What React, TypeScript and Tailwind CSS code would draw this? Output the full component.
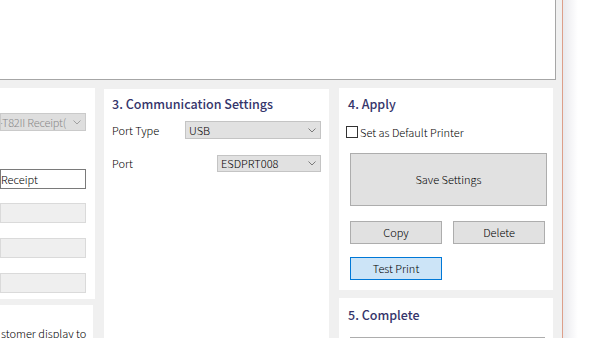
import React from "react";

const Chevron = ({ color = "#7a7a7a" }: { color?: string }) => (
  <svg width="8" height="5" viewBox="0 0 8 5" fill="none">
    <path d="M0.5 0.5 L4 4 L7.5 0.5" stroke={color} strokeWidth="1" />
  </svg>
);

export default function App() {
  return (
    <div
      className="w-[600px] h-[338px] overflow-hidden bg-[#f0f0f0] flex text-[11px] font-light text-black"
      style={{ fontFamily: '"Noto Sans CJK JP", "Noto Sans", sans-serif' }}
    >
      <div className="w-[562px] shrink-0 flex flex-col">
        <div className="h-[80px] w-[556px] bg-white border-r border-b border-[#a6a6a6] shrink-0" />
        <div className="flex mt-[8px]">
          {/* left column */}
          <div className="w-[95px] shrink-0 flex flex-col">
            <div className="h-[211px] bg-white flex flex-col">
              <div className="mt-[25px] h-[18px] w-[86px] bg-[#dedede] border border-[#cacaca] flex items-center overflow-hidden">
                <span className="ml-[-2px] text-[#8a8a8a] whitespace-nowrap leading-none tracking-[-0.2px]">-T82II Receipt(</span>
                <span className="ml-auto mr-[4px] shrink-0"><Chevron color="#a0a0a0" /></span>
              </div>
              <div className="mt-[38px] h-[20px] w-[86px] bg-white border border-[#7a7a7a] flex items-center overflow-hidden">
                <span className="whitespace-nowrap leading-none">Receipt</span>
              </div>
              <div className="mt-[14px] h-[20px] w-[86px] bg-[#efefef] border border-[#dadada]" />
              <div className="mt-[15px] h-[20px] w-[86px] bg-[#efefef] border border-[#dadada]" />
              <div className="mt-[15px] h-[20px] w-[86px] bg-[#efefef] border border-[#dadada]" />
            </div>
            <div className="mt-[6px] w-[93px] h-[60px] bg-white pt-[21px] pl-[1px] overflow-hidden">
              <span className="block whitespace-nowrap leading-[14px]">stomer display to</span>
            </div>
          </div>

          {/* middle column */}
          <div className="ml-[9px] w-[225px] shrink-0 h-[260px] bg-white mt-[1px] px-[8px] pt-[6px] flex flex-col">
            <div className="text-[12.5px] font-medium leading-[18px] text-[#35356b] whitespace-nowrap">
              3. Communication Settings
            </div>
            <div className="mt-[8px] flex items-center h-[18px]">
              <span className="w-[73px] shrink-0 whitespace-nowrap">Port Type</span>
              <div className="flex-1 h-[18px] bg-[#e1e1e1] border border-[#c4c4c4] flex items-center pl-[3px] pr-[4px]">
                <span className="leading-none">USB</span>
                <span className="ml-auto"><Chevron /></span>
              </div>
            </div>
            <div className="mt-[16px] flex items-center h-[17px]">
              <span className="w-[105px] shrink-0">Port</span>
              <div className="flex-1 h-[17px] bg-[#e1e1e1] border border-[#c4c4c4] flex items-center pl-[3px] pr-[4px]">
                <span className="leading-none">ESDPRT008</span>
                <span className="ml-auto"><Chevron /></span>
              </div>
            </div>
          </div>

          {/* right column */}
          <div className="ml-[10px] w-[214px] shrink-0 flex flex-col">
            <div className="bg-white h-[202px] pt-[7px] pl-[7px] pr-[6px] flex flex-col">
              <div className="pl-[2px] text-[12.5px] font-medium leading-[18px] text-[#35356b]">4. Apply</div>
              <div className="mt-[12px] flex items-center h-[14px]">
                <span className="w-[12px] h-[12px] border border-[#333] bg-white shrink-0" />
                <span className="ml-[2px] whitespace-nowrap">Set as Default Printer</span>
              </div>
              <div className="mt-[14px] ml-[4px] h-[53px] bg-[#e1e1e1] border border-[#adadad] flex items-center justify-center">
                Save Settings
              </div>
              <div className="mt-[15px] ml-[4px] flex gap-[11px]">
                <div className="w-[92px] h-[23px] bg-[#e1e1e1] border border-[#adadad] flex items-center justify-center">Copy</div>
                <div className="w-[92px] h-[23px] bg-[#e1e1e1] border border-[#adadad] flex items-center justify-center">Delete</div>
              </div>
              <div className="mt-[13px] ml-[4px] w-[92px] h-[23px] bg-[#cce4f7] border border-[#0078d7] flex items-center justify-center">
                Test Print
              </div>
            </div>
            <div className="mt-[8px] bg-white h-[60px] pt-[8px] pl-[9px] pr-[8px]">
              <div className="text-[12.5px] font-medium leading-[18px] text-[#35356b]">5. Complete</div>
              <div className="mt-[13px] ml-[2px] h-[20px] border border-[#adadad] bg-[#e1e1e1]" />
            </div>
          </div>
        </div>
      </div>
      <div className="w-[1px] shrink-0 bg-[#dd9f8a]" />
      <div className="flex-1 bg-gradient-to-r from-[#e9e9ed] to-white to-[40%]" />
    </div>
  );
}
